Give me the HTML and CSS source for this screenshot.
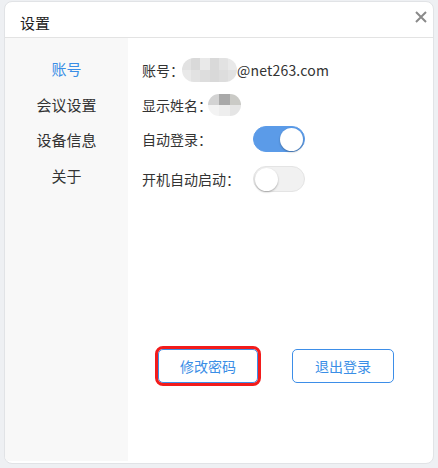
FILE: index.html
```html
<!DOCTYPE html>
<html lang="zh-CN">
<head>
<meta charset="utf-8">
<title>设置</title>
<link rel="stylesheet" href="styles.css">
</head>
<body>
<div class="dialog">
  <div class="header">
    <div class="title">设置</div>
    <svg class="close" width="12" height="12" viewBox="0 0 12 12"><path d="M1 1 L11 11 M11 1 L1 11" stroke="#8a8a8a" stroke-width="2" fill="none"/></svg>
  </div>
  <div class="body">
    <div class="sidebar">
      <div class="nav active">账号</div>
      <div class="nav">会议设置</div>
      <div class="nav">设备信息</div>
      <div class="nav">关于</div>
    </div>
    <div class="content">
      <div class="row r1">
        <span class="label">账号：</span>
        <span class="mosaic email">
          <i class="m a"></i><i class="m b"></i><i class="m c"></i><i class="m b"></i><i class="m a"></i><i class="m c"></i>
          <i class="m c"></i><i class="m a"></i><i class="m d"></i><i class="m b"></i><i class="m d"></i><i class="m a"></i>
        </span>
        <span class="value">@net263.com</span>
      </div>
      <div class="row r2">
        <span class="label">显示姓名：</span>
        <span class="mosaic name">
          <i class="m e"></i><i class="m f"></i><i class="m g"></i>
          <i class="m h"></i><i class="m i"></i><i class="m j"></i>
        </span>
      </div>
      <div class="row r3">
        <span class="label fixed">自动登录：</span>
        <span class="toggle on"><span class="knob"></span></span>
      </div>
      <div class="row r4">
        <span class="label fixed">开机自动启动：</span>
        <span class="toggle"><span class="knob"></span></span>
      </div>
      <div class="actions">
        <button class="btn highlighted">修改密码</button>
        <button class="btn wide">退出登录</button>
      </div>
    </div>
  </div>
</div>
</body>
</html>
```
FILE: styles.css
```css
* { box-sizing: border-box; }
html, body { margin: 0; padding: 0; }
body {
  background: #eef0f3;
  width: 438px;
  height: 468px;
  overflow: hidden;
  font-family: "Noto Sans CJK SC", "Noto Sans", sans-serif;
  color: #333;
  padding: 1px 0 0 4px;
}
.dialog {
  width: 430px;
  height: 463px;
  background: #fff;
  border: 1px solid #e1e3e6;
  border-radius: 8px;
  display: flex;
  flex-direction: column;
  overflow: hidden;
}
.header {
  height: 36px;
  flex: none;
  border-bottom: 1px solid #e3e3e3;
  display: flex;
  justify-content: space-between;
  align-items: flex-start;
}
.title {
  font-size: 15px;
  line-height: 22px;
  padding: 10px 0 0 15px;
  color: #222;
}
.close {
  margin: 9px 6px 0 0;
}
.body {
  flex: 1;
  display: flex;
  margin-bottom: 2px;
}
.sidebar {
  width: 123px;
  background: #f8f8f8;
  padding-top: 13px;
}
.nav {
  font-size: 15px;
  line-height: 35.5px;
  text-align: center;
  color: #333;
}
.nav.active { color: #3a8ee6; }
.content {
  flex: 1;
  padding: 19px 0 0 14px;
  display: flex;
  flex-direction: column;
}
.row {
  display: flex;
  align-items: center;
  height: 26px;
  font-size: 14px;
}
.r2 { margin-top: 9px; }
.r3 { margin-top: 8px; }
.r4 { margin-top: 14px; }
.label { white-space: nowrap; }
.label.fixed { width: 111px; }
.mosaic {
  display: grid;
  border-radius: 12px;
  overflow: hidden;
}
.email {
  width: 55px;
  height: 24px;
  grid-template-columns: repeat(6, 1fr);
  grid-template-rows: 1fr 1fr;
  margin-left: -2px;
}
.name {
  width: 33px;
  height: 22px;
  grid-template-columns: repeat(3, 1fr);
  grid-template-rows: 1fr 1fr;
  margin-left: -4px;
  border-radius: 11px;
}
.m { display: block; }
.m.a { background: #e2e2e2; }
.m.b { background: #d9d9d9; }
.m.c { background: #e9e9e9; }
.m.d { background: #dddddd; }
.m.e { background: #d3d3d3; }
.m.f { background: #a9a9a9; }
.m.g { background: #cacac6; }
.m.h { background: #f3f3f3; }
.m.i { background: #eeeeee; }
.m.j { background: #e5e5e5; }
.value { color: #333; letter-spacing: 0.2px; }
.toggle {
  width: 52px;
  height: 26px;
  border-radius: 13px;
  background: #f1f1f1;
  border: 1px solid #e4e4e4;
  display: flex;
  align-items: center;
  padding: 0 1px;
}
.toggle.on {
  background: #5b9be8;
  border-color: #5b9be8;
  justify-content: flex-end;
}
.knob {
  width: 23px;
  height: 23px;
  border-radius: 50%;
  background: #fff;
  box-shadow: 0 1px 2px rgba(0,0,0,0.3);
}
.actions {
  display: flex;
  gap: 34px;
  margin-top: 157px;
  padding-left: 16px;
}
.btn {
  width: 100px;
  height: 34px;
  background: #fff;
  border: 1px solid #3d8ee8;
  border-radius: 5px;
  color: #3a8ee6;
  font-family: "Noto Sans CJK SC", "Noto Sans", sans-serif;
  font-size: 14px;
  padding: 0;
}
.btn.wide { width: 102px; }
.highlighted {
  outline: 3px solid #f21c1c;
  outline-offset: 0;
}
```
